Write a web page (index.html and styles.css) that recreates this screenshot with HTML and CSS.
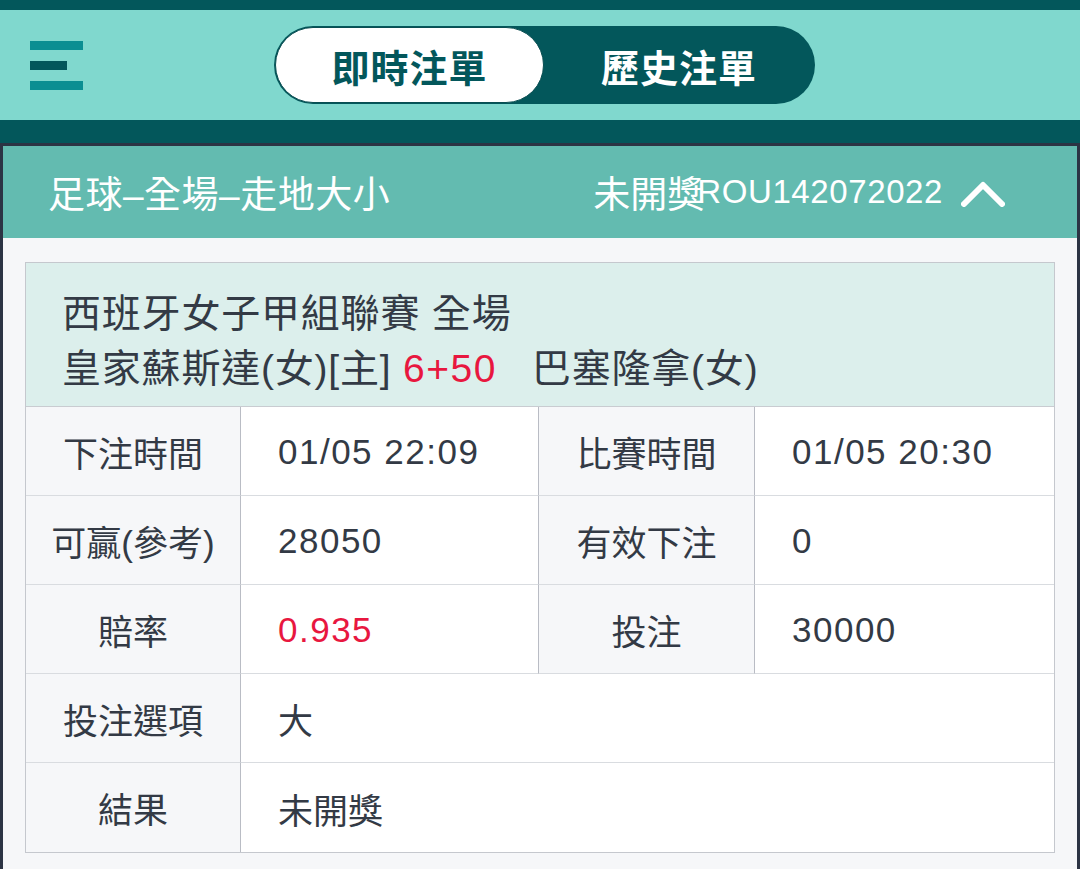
FILE: index.html
```html
<!DOCTYPE html>
<html lang="zh-Hant">
<head>
<meta charset="utf-8">
<title>即時注單</title>
<link rel="stylesheet" href="styles.css">
</head>
<body>
<div class="page">
  <header class="nav">
    <button class="menu" aria-label="menu">
      <span class="bar bar-a"></span>
      <span class="bar bar-b"></span>
      <span class="bar bar-a"></span>
    </button>
    <div class="toggle">
      <div class="tab tab-active">即時注單</div>
      <div class="tab">歷史注單</div>
    </div>
  </header>

  <section class="card">
    <div class="card-head">
      <div class="card-title">足球<span class="dash">–</span>全場<span class="dash">–</span>走地大小</div>
      <div class="card-status">
        <span class="status-cn">未開獎</span><span class="status-id">ROU142072022</span>
        <svg class="chevron" width="44" height="28" viewBox="0 0 44 28"><polyline points="3,25 22,6 41,25" fill="none" stroke="#fff" stroke-width="6" stroke-linecap="round" stroke-linejoin="round"/></svg>
      </div>
    </div>
    <div class="card-body">
      <div class="detail">
        <div class="info">
          <div class="info-line">西班牙女子甲組聯賽 全場</div>
          <div class="info-line">皇家蘇斯達(女)[主] <span class="red num">6+50</span>&nbsp;&nbsp; 巴塞隆拿(女)</div>
        </div>
        <div class="grid">
          <div class="cell label">下注時間</div>
          <div class="cell value num">01/05 22:09</div>
          <div class="cell label">比賽時間</div>
          <div class="cell value num last">01/05 20:30</div>

          <div class="cell label">可贏(參考)</div>
          <div class="cell value num">28050</div>
          <div class="cell label">有效下注</div>
          <div class="cell value num last">0</div>

          <div class="cell label">賠率</div>
          <div class="cell value num red">0.935</div>
          <div class="cell label">投注</div>
          <div class="cell value num last">30000</div>

          <div class="cell label">投注選項</div>
          <div class="cell value wide last">大</div>

          <div class="cell label bottom">結果</div>
          <div class="cell value wide last bottom">未開獎</div>
        </div>
      </div>
    </div>
  </section>
</div>
</body>
</html>
```

FILE: styles.css
```css
* { box-sizing: border-box; }

html, body {
  margin: 0;
  padding: 0;
}

body {
  width: 1080px;
  height: 869px;
  overflow: hidden;
  background: #03575b;
  font-family: "Liberation Sans", "Noto Sans CJK TC", sans-serif;
  color: #333a45;
}

.page {
  padding-top: 10px;
}

.nav {
  height: 110px;
  background: #80d8ce;
  display: flex;
  align-items: center;
  position: relative;
}

.menu {
  border: 0;
  background: none;
  padding: 0;
  margin-left: 30px;
  width: 53px;
  display: flex;
  flex-direction: column;
  gap: 11px;
}

.bar {
  display: block;
  height: 9px;
  width: 53px;
}

.bar-a { background: #0b8e92; }
.bar-b { background: #03575b; width: 37px; }

.toggle {
  margin-left: 191px;
  width: 541px;
  height: 78px;
  border-radius: 39px;
  background: #03575b;
  display: flex;
  padding: 1px;
}

.tab {
  flex: 1;
  display: flex;
  align-items: center;
  justify-content: center;
  font-family: "Noto Sans CJK TC", sans-serif;
  font-weight: 700;
  font-size: 38px;
  color: #ffffff;
  letter-spacing: 1px;
}

.tab-active {
  flex: 0 0 269px;
  background: #ffffff;
  color: #03575b;
  border-radius: 38px;
  border: 1.5px solid #0a4e52;
}

.card {
  margin-top: 23px;
  border: 3px solid #2c3444;
  border-bottom: 0;
  background: #f6f7f9;
  height: 736px;
}

.card-head {
  height: 92px;
  background: #63bbb0;
  display: flex;
  align-items: center;
  justify-content: space-between;
  padding: 0 72px 0 45px;
  color: #ffffff;
  font-family: "Noto Sans CJK TC", sans-serif;
  font-size: 37px;
}

.card-title {
  letter-spacing: 0.5px;
}

.dash {
  font-family: "Liberation Sans", sans-serif;
  margin: 0;
}

.card-status {
  display: flex;
  align-items: center;
}

.status-id {
  font-family: "Liberation Sans", sans-serif;
  font-size: 33px;
  margin-left: -7px;
  letter-spacing: 0.6px;
}

.chevron {
  margin-left: 18px;
  margin-top: 2px;
}

.card-body {
  padding: 24px 22px 0 22px;
}

.detail {
  border: 1px solid #c5c8ce;
  background: #ffffff;
}

.info {
  background: #dcefec;
  height: 144px;
  padding: 23px 0 0 36px;
  font-size: 39px;
  border-bottom: 1px solid #c9ccd1;
}

.info-line {
  line-height: 55px;
  letter-spacing: 0.8px;
}

.num {
  letter-spacing: 1.5px;
}

.red { color: #e8173f; }

.grid {
  display: grid;
  grid-template-columns: 215px 298px 216px 1fr;
  grid-auto-rows: 89px;
}

.cell {
  display: flex;
  align-items: center;
  font-size: 35px;
  border-bottom: 1px solid #d9dce0;
  border-right: 1px solid #b9bcc4;
}

.cell.last { border-right: 0; }
.cell.bottom { border-bottom: 0; }

.label {
  background: #f6f7f9;
  justify-content: center;
}

.value {
  background: #ffffff;
  padding-left: 37px;
  padding-top: 1px;
}

.wide {
  grid-column: span 3;
}
```
